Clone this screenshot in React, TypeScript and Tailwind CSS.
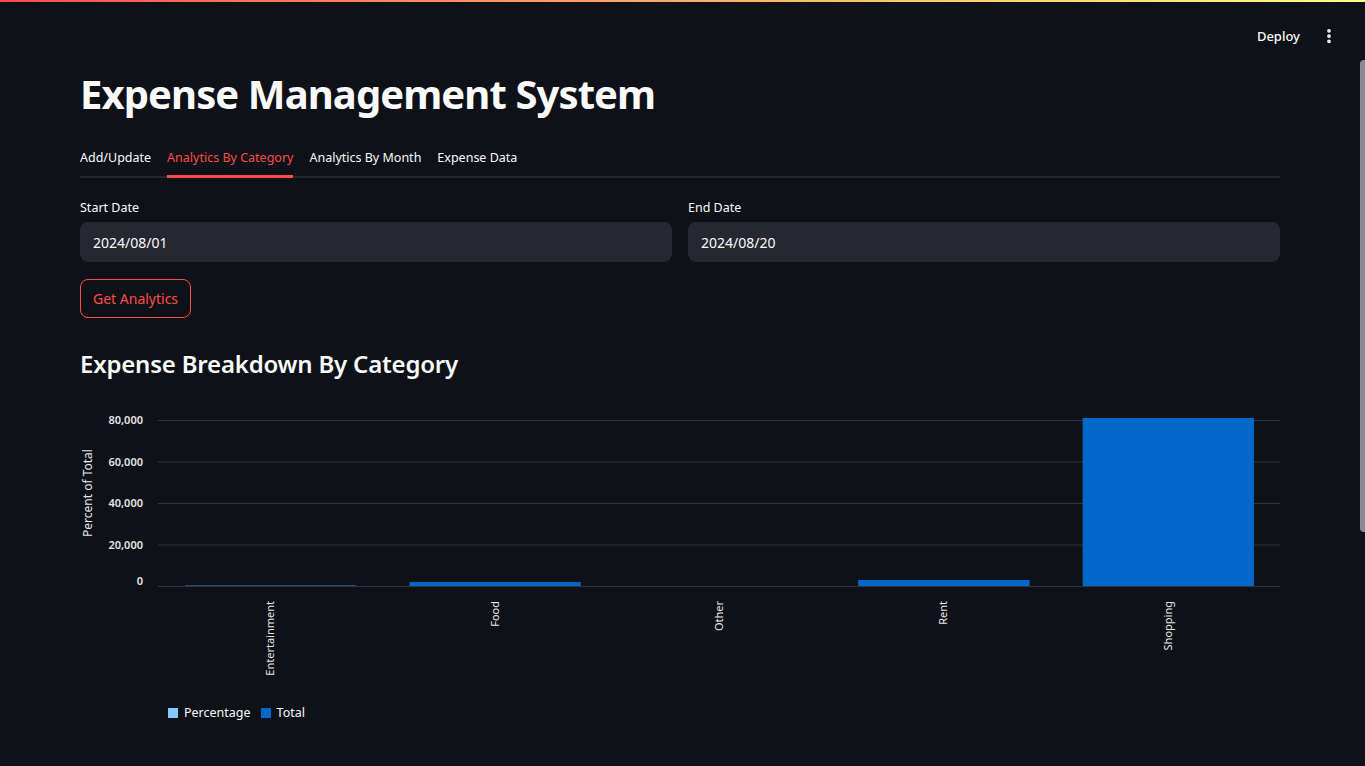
import { MoreVertical } from "lucide-react";

const tabs = ["Add/Update", "Analytics By Category", "Analytics By Month", "Expense Data"];

const bars = [
  { name: "Entertainment", total: 400 },
  { name: "Food", total: 1900 },
  { name: "Other", total: 0 },
  { name: "Rent", total: 2900 },
  { name: "Shopping", total: 81000 },
];

const ticks = [0, 20000, 40000, 60000, 80000];

function Chart() {
  const plotLeft = 78;
  const plotRight = 1200;
  const base = 186;
  const top = 20;
  const y = (v: number) => base - ((base - top) * v) / 80000;
  const band = (plotRight - plotLeft) / bars.length;
  return (
    <svg width={1200} height={330} className="block">
      {ticks.map((t) => (
        <g key={t}>
          <line x1={plotLeft} x2={plotRight} y1={y(t) + 0.5} y2={y(t) + 0.5} stroke="#31333f" strokeWidth={1} />
          <text
            x={63}
            y={t === 0 ? y(t) - 1 : y(t) + 4}
            textAnchor="end"
            fontSize={11}
            fontWeight={600}
            fill="#e6e6e9"
            fontFamily="'Noto Sans', sans-serif"
          >
            {t.toLocaleString("en-US")}
          </text>
        </g>
      ))}
      <text
        transform="translate(12 93) rotate(-90)"
        textAnchor="middle"
        fontSize={12}
        fill="#e6e6e9"
        fontFamily="'Noto Sans', sans-serif"
      >
        Percent of Total
      </text>
      {bars.map((b, i) => {
        const x0 = plotLeft + band * i + 27;
        const w = band - 53;
        const h = Math.max(base - y(b.total), b.total > 0 ? 1 : 0);
        const cx = plotLeft + band * i + band / 2;
        return (
          <g key={b.name}>
            <rect x={x0} y={base - h} width={w} height={h} fill={b.total < 1000 ? "#1f4d7d" : "#0068c9"} />
            <text
              transform={`translate(${cx + 4} 201) rotate(-90)`}
              textAnchor="end"
              fontSize={11}
              fill="#e6e6e9"
              fontFamily="'Noto Sans', sans-serif"
            >
              {b.name}
            </text>
          </g>
        );
      })}
    </svg>
  );
}

export default function App() {
  return (
    <div className="relative min-h-[766px] bg-[#0e1117] text-[#fafafa]" style={{ fontFamily: "'Noto Sans', sans-serif" }}>
      <div className="h-[2px] bg-gradient-to-r from-[#ff4b4b] to-[#fffd80]" />
      <header className="flex h-[58px] items-start justify-end gap-5 pr-[27px] pt-[25px]">
        <span className="text-[13px] font-medium leading-[18px]">Deploy</span>
        <MoreVertical className="h-[18px] w-[18px]" strokeWidth={3} />
      </header>
      <div className="absolute right-0 top-[60px] h-[472px] w-[5px] rounded-l bg-[#8a8b91]" />

      <main className="mx-[80px] w-[1200px]">
        <h1 className="mt-[6px] text-[40px] font-bold leading-[56px] tracking-[-0.9px]">Expense Management System</h1>

        <div className="mt-[27px] flex gap-4 border-b-2 border-[#262730] text-[12.5px] leading-[18px]">
          {tabs.map((t, i) => (
            <div
              key={t}
              className={
                i === 1
                  ? "-mb-[2px] border-b-[3px] border-[#ff4b4b] pb-[8px] text-[#ff4b4b]"
                  : "pb-[9px]"
              }
            >
              {t}
            </div>
          ))}
        </div>

        <div className="mt-[21px] grid grid-cols-2 gap-4">
          {["2024/08/01", "2024/08/20"].map((d, i) => (
            <div key={d}>
              <div className="mb-[5px] text-[12.5px] leading-[18px]">{i === 0 ? "Start Date" : "End Date"}</div>
              <div className="flex h-[40px] items-center rounded-lg bg-[#262730] px-[13px] text-[14px]">{d}</div>
            </div>
          ))}
        </div>

        <button className="mt-[17px] flex h-[39px] items-center rounded-lg border border-[#ff4b4b] px-[12px] text-[14px] text-[#ff4b4b]">
          Get Analytics
        </button>

        <h2 className="mt-[28px] text-[24px] font-semibold leading-[36px] tracking-[-0.2px]">Expense Breakdown By Category</h2>

        <div className="mt-[18px]">
          <Chart />
        </div>
        <div className="-mt-[26px] flex items-center gap-[10px] pl-[88px] text-[12.5px]">
          <span className="flex items-center gap-[6px]">
            <span className="h-[10px] w-[10px] bg-[#83c9ff]" />
            Percentage
          </span>
          <span className="flex items-center gap-[6px]">
            <span className="h-[10px] w-[10px] bg-[#0068c9]" />
            Total
          </span>
        </div>
      </main>
    </div>
  );
}
